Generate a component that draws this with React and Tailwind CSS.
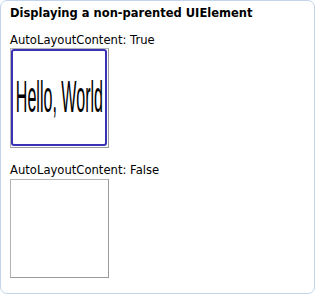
export default function App() {
  return (
    <div className="w-[316px] h-[295px] bg-white" style={{ fontFamily: '"DejaVu Sans", Verdana, sans-serif' }}>
      <div className="w-[315px] h-[294px] border border-[#c3d4ec] rounded-[7px] pt-[6px] pl-[9px] text-black text-[11.6px] leading-[13px]">
        <h1 className="font-bold text-[11.5px] leading-[13px]">Displaying a non-parented UIElement</h1>

        <p className="mt-[14px]">AutoLayoutContent: True</p>
        <div className="mt-[1px] w-[99px] h-[100px] border border-[#b4b4b4] border-r-[#9a9a9a] border-b-[#9a9a9a] pr-[1px] pb-[1px]">
          <div className="w-full h-full border-2 border-[#3a32b4] rounded-[3px] flex items-center justify-center overflow-hidden">
            <span
              className="block whitespace-nowrap text-[44px] leading-none scale-x-[0.365] origin-center -mt-[2px]"
              style={{ fontFamily: '"Liberation Sans", Arial, sans-serif' }}
            >
              Hello, World
            </span>
          </div>
        </div>

        <p className="mt-[16px]">AutoLayoutContent: False</p>
        <div className="mt-[2px] w-[99px] h-[99px] border border-[#b4b4b4] border-r-[#9a9a9a] border-b-[#9a9a9a]" />
      </div>
    </div>
  );
}
